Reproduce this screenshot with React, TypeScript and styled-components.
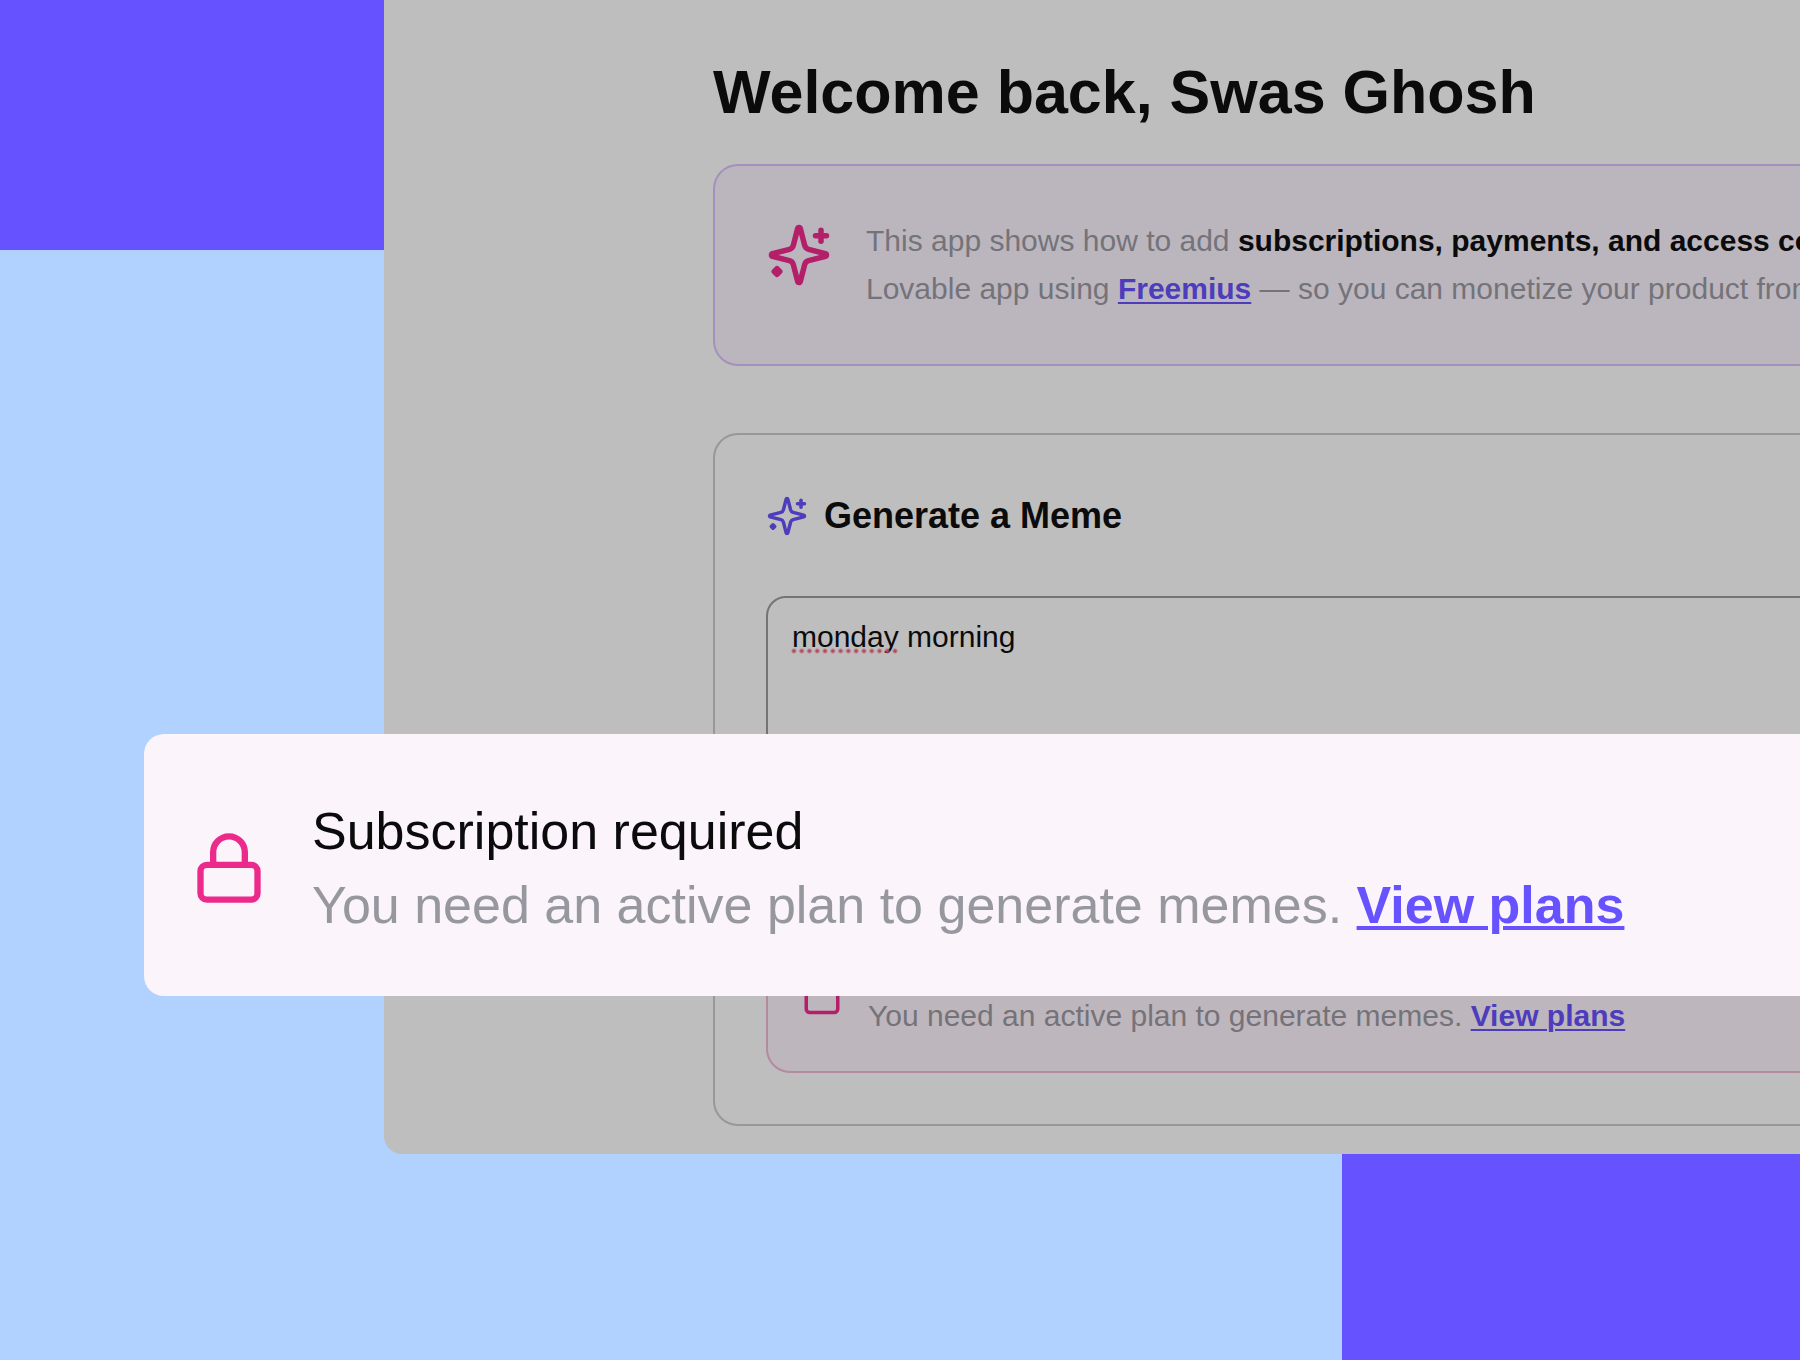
import React, { useState } from "react";
import styled, { createGlobalStyle } from "styled-components";

const color = {
  sky: "#b1d1ff",
  violet: "#6752ff",
  violetDim: "#4d3dbc",
  pink: "#ec2a8b",
  pinkDim: "#b41f69",
  panel: "#bebebe",
  ink: "#0b0b0c",
  muted: "#97979f",
  mutedDim: "#747379",
};

const GlobalStyle = createGlobalStyle`
  *, *::before, *::after { box-sizing: border-box; }
  body {
    margin: 0;
    background: ${color.sky};
    font-family: "Liberation Sans", Arial, Helvetica, sans-serif;
    color: ${color.ink};
  }
  h1, h2, p { margin: 0; }
`;

const Stage = styled.div`
  position: relative;
  display: grid;
  grid-template-columns: 384px minmax(0, 1fr) 458px;
  grid-template-rows: 250px auto minmax(206px, 1fr);
  min-height: 100vh;
  overflow: hidden;
  background: ${color.sky};
`;

const CornerBlock = styled.div<{ $corner: "top" | "bottom" }>`
  grid-column: ${(p) => (p.$corner === "top" ? 1 : 3)};
  grid-row: ${(p) => (p.$corner === "top" ? 1 : 3)};
  background: ${color.violet};
`;

const Panel = styled.main`
  grid-column: 2 / 4;
  grid-row: 1 / 3;
  overflow: hidden;
  padding: 56px 0 28px 329px;
  border-bottom-left-radius: 18px;
  background: ${color.panel};
`;

const Content = styled.div`
  display: flex;
  flex-direction: column;
  margin-right: -120px;
`;

const Title = styled.h1`
  margin-bottom: 36px;
  font-size: 61px;
  line-height: 72px;
  font-weight: 700;
  white-space: nowrap;
`;

const Card = styled.section<{ $tinted?: boolean }>`
  padding: 51px;
  border: 2px solid ${(p) => (p.$tinted ? "#a490bd" : "#989898")};
  border-radius: 25px;
  background: ${(p) => (p.$tinted ? "#bbb6be" : "transparent")};
`;

const IntroCard = styled(Card)`
  display: flex;
  align-items: flex-start;
  gap: 34px;
  margin-bottom: 67px;
`;

const IntroIcon = styled.span`
  display: flex;
  padding-top: 5px;
`;

const IntroText = styled.p`
  font-size: 30px;
  line-height: 48px;
  color: ${color.mutedDim};
  white-space: nowrap;
`;

const Strong = styled.strong`
  color: ${color.ink};
`;

const Link = styled.a<{ $bright?: boolean }>`
  font-weight: 700;
  color: ${(p) => (p.$bright ? color.violet : color.violetDim)};
  text-decoration: underline;
  text-decoration-thickness: ${(p) => (p.$bright ? 4 : 2)}px;
  text-underline-offset: 3px;
`;

const CardHeading = styled.h2`
  display: flex;
  align-items: center;
  gap: 16px;
  margin-bottom: 50px;
  font-size: 36px;
  line-height: 60px;
  font-weight: 700;
`;

const PromptField = styled.div`
  position: relative;
  display: flex;
  margin-bottom: 51px;
`;

const PromptInput = styled.textarea`
  flex: 1;
  height: 270px;
  padding: 18px 24px;
  border: 2px solid #747474;
  border-radius: 20px;
  outline: none;
  resize: none;
  background: transparent;
  color: ${color.ink};
  font-family: inherit;
  font-size: 30px;
  line-height: 42px;
`;

const SpellingMark = styled.span`
  position: absolute;
  top: 52px;
  left: 24px;
  width: 109px;
  height: 6px;
  background-image: radial-gradient(circle, #b8485a 1px, transparent 3px);
  background-size: 8px 6px;
  background-repeat: round;
  pointer-events: none;
`;

const Notice = styled.div`
  display: flex;
  align-items: center;
  gap: 25px;
  padding: 34px 33px;
  border: 2px solid #b48a9e;
  border-radius: 24px;
  background: #beb6bd;
`;

const NoticeText = styled.div`
  font-size: 30px;
  line-height: 42px;
  white-space: nowrap;
`;

const Muted = styled.p<{ $bright?: boolean }>`
  color: ${(p) => (p.$bright ? color.muted : color.mutedDim)};
`;

const Callout = styled.aside`
  position: absolute;
  top: 734px;
  left: 144px;
  right: 0;
  display: flex;
  align-items: center;
  gap: 45px;
  padding: 60px 0 54px 47px;
  border-radius: 20px 0 0 20px;
  background: #fcf4fb;
`;

const CalloutText = styled.div`
  font-size: 52px;
  line-height: 74px;
  white-space: nowrap;
`;

const Icon = styled.svg<{ $size: number; $color: string }>`
  flex: none;
  width: ${(p) => p.$size}px;
  height: ${(p) => p.$size}px;
  fill: none;
  stroke: ${(p) => p.$color};
  stroke-width: 2;
  stroke-linecap: round;
  stroke-linejoin: round;
`;

type IconProps = { size: number; tone: string };

const Sparkles = ({ size, tone }: IconProps) => (
  <Icon $size={size} $color={tone} viewBox="0 0 24 24" aria-hidden="true">
    <path d="M9.937 15.5A2 2 0 0 0 8.5 14.063l-6.135-1.582a.5.5 0 0 1 0-.962L8.5 9.936A2 2 0 0 0 9.937 8.5l1.582-6.135a.5.5 0 0 1 .963 0L14.063 8.5A2 2 0 0 0 15.5 9.937l6.135 1.581a.5.5 0 0 1 0 .964L15.5 14.063a2 2 0 0 0-1.437 1.437l-1.582 6.135a.5.5 0 0 1-.963 0z" />
    <path d="M20 3v4" />
    <path d="M22 5h-4" />
    <path d="M4 17l1 1-1 1-1-1z" />
  </Icon>
);

const Lock = ({ size, tone }: IconProps) => (
  <Icon $size={size} $color={tone} viewBox="0 0 24 24" aria-hidden="true">
    <rect x="3" y="11" width="18" height="11" rx="2" ry="2" />
    <path d="M7 11V7a5 5 0 0 1 10 0v4" />
  </Icon>
);

export default function App() {
  const [prompt, setPrompt] = useState("monday morning");

  return (
    <>
      <GlobalStyle />
      <Stage>
        <CornerBlock $corner="top" />
        <CornerBlock $corner="bottom" />

        <Panel>
          <Content>
            <Title>Welcome back, Swas Ghosh</Title>

            <IntroCard $tinted>
              <IntroIcon>
                <Sparkles size={66} tone={color.pinkDim} />
              </IntroIcon>
              <IntroText>
                This app shows how to add{" "}
                <Strong>subscriptions, payments, and access control</Strong>
                <br />
                Lovable app using <Link href="#freemius">Freemius</Link> — so you
                can monetize your product from
              </IntroText>
            </IntroCard>

            <Card>
              <CardHeading>
                <Sparkles size={42} tone={color.violetDim} />
                <label htmlFor="prompt">Generate a Meme</label>
              </CardHeading>

              <PromptField>
                <PromptInput
                  id="prompt"
                  spellCheck={false}
                  value={prompt}
                  onChange={(e) => setPrompt(e.target.value)}
                />
                {prompt.startsWith("monday") && <SpellingMark />}
              </PromptField>

              <Notice>
                <Lock size={42} tone={color.pinkDim} />
                <NoticeText>
                  <p>Subscription required</p>
                  <Muted>
                    You need an active plan to generate memes.{" "}
                    <Link href="#plans">View plans</Link>
                  </Muted>
                </NoticeText>
              </Notice>
            </Card>
          </Content>
        </Panel>

        <Callout>
          <Lock size={76} tone={color.pink} />
          <CalloutText>
            <p>Subscription required</p>
            <Muted $bright>
              You need an active plan to generate memes.{" "}
              <Link $bright href="#plans">
                View plans
              </Link>
            </Muted>
          </CalloutText>
        </Callout>
      </Stage>
    </>
  );
}
